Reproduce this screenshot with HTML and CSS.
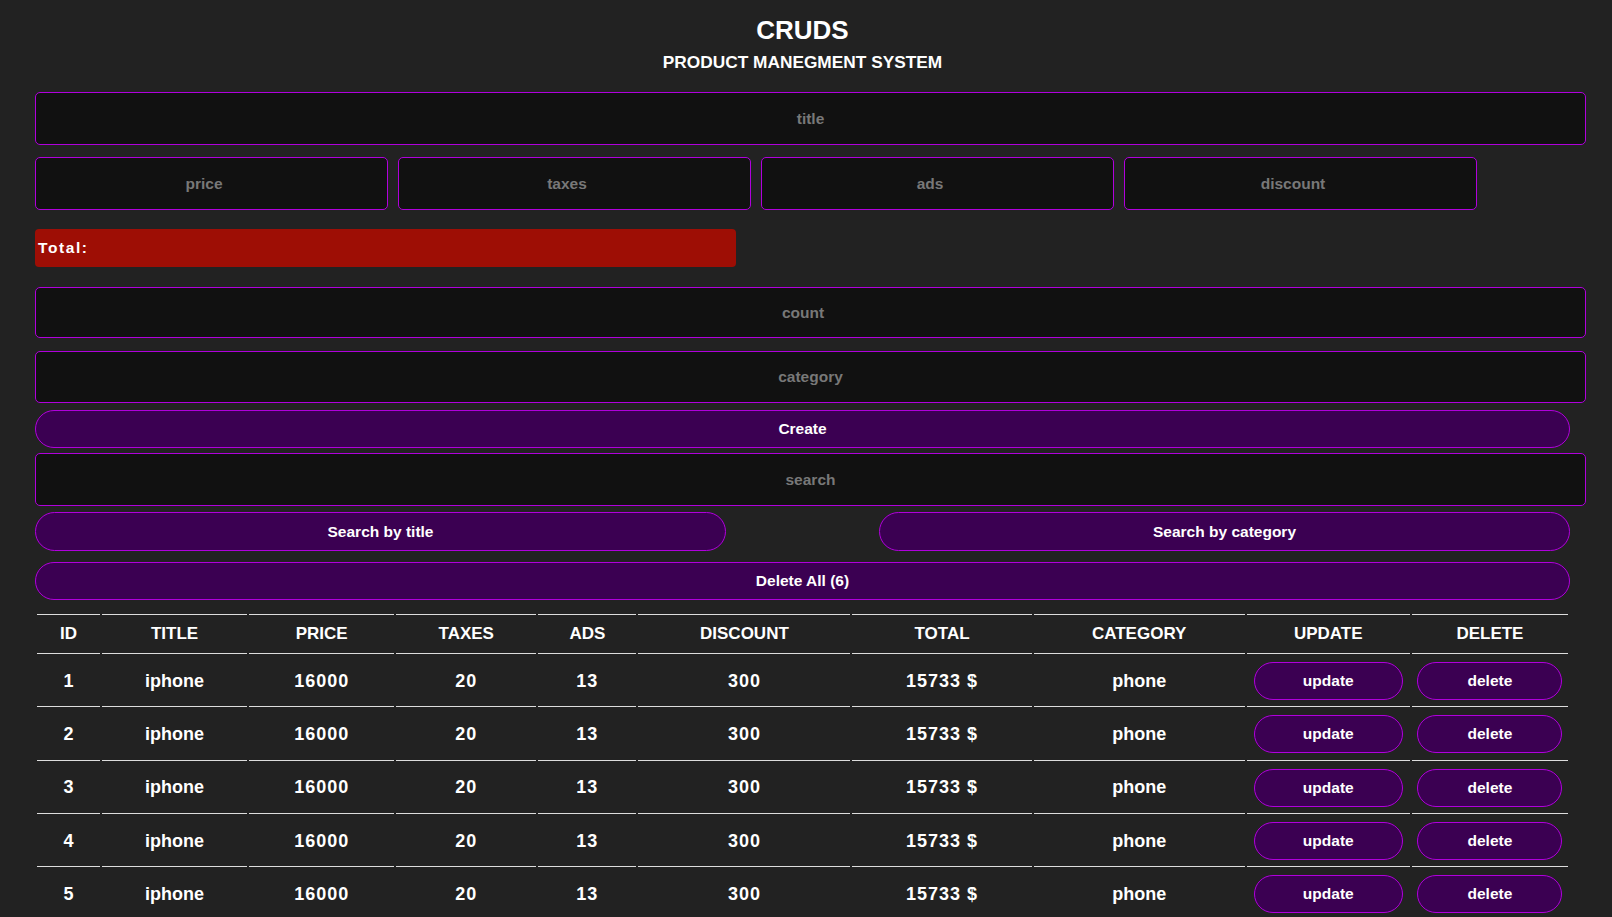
FILE: index.html
```html
<!DOCTYPE html>
<html lang="en">
<head>
<meta charset="utf-8">
<title>CRUDS</title>
<link rel="stylesheet" href="styles.css">
</head>
<body>
<div class="crud">
  <div class="head">
    <h2 class="logo">CRUDS</h2>
    <p class="sub">PRODUCT MANEGMENT SYSTEM</p>
  </div>
  <div class="inputs">
    <input class="field field-title" type="text" placeholder="title">
    <div class="price">
      <input class="field field-small" type="number" placeholder="price">
      <input class="field field-small" type="number" placeholder="taxes">
      <input class="field field-small" type="number" placeholder="ads">
      <input class="field field-small" type="number" placeholder="discount">
    </div>
    <div class="total">Total:</div>
    <input class="field field-count" type="number" placeholder="count">
    <input class="field field-category" type="text" placeholder="category">
    <button class="btn btn-create">Create</button>
  </div>
  <div class="search-area">
    <input class="field field-search" type="text" placeholder="search">
    <div class="search-btns">
      <button class="btn btn-half">Search by title</button>
      <button class="btn btn-half">Search by category</button>
    </div>
  </div>
  <div class="delete-all">
    <button class="btn btn-delall">Delete All (6)</button>
  </div>
  <table class="outputs">
    <colgroup>
      <col class="c-id"><col class="c-title"><col class="c-price"><col class="c-taxes"><col class="c-ads"><col class="c-discount"><col class="c-total"><col class="c-category"><col class="c-update"><col class="c-delete">
    </colgroup>
    <thead>
      <tr class="hrow">
        <th>ID</th><th>TITLE</th><th>PRICE</th><th>TAXES</th><th>ADS</th><th>DISCOUNT</th><th>TOTAL</th><th>CATEGORY</th><th>UPDATE</th><th>DELETE</th>
      </tr>
    </thead>
    <tbody>
      <tr class="brow"><td>1</td><td>iphone</td><td class="num">16000</td><td class="num">20</td><td class="num">13</td><td class="num">300</td><td class="num">15733 $</td><td>phone</td><td><button class="btn btn-row btn-update">update</button></td><td><button class="btn btn-row btn-delete">delete</button></td></tr>
      <tr class="brow"><td>2</td><td>iphone</td><td class="num">16000</td><td class="num">20</td><td class="num">13</td><td class="num">300</td><td class="num">15733 $</td><td>phone</td><td><button class="btn btn-row btn-update">update</button></td><td><button class="btn btn-row btn-delete">delete</button></td></tr>
      <tr class="brow"><td>3</td><td>iphone</td><td class="num">16000</td><td class="num">20</td><td class="num">13</td><td class="num">300</td><td class="num">15733 $</td><td>phone</td><td><button class="btn btn-row btn-update">update</button></td><td><button class="btn btn-row btn-delete">delete</button></td></tr>
      <tr class="brow"><td>4</td><td>iphone</td><td class="num">16000</td><td class="num">20</td><td class="num">13</td><td class="num">300</td><td class="num">15733 $</td><td>phone</td><td><button class="btn btn-row btn-update">update</button></td><td><button class="btn btn-row btn-delete">delete</button></td></tr>
      <tr class="brow"><td>5</td><td>iphone</td><td class="num">16000</td><td class="num">20</td><td class="num">13</td><td class="num">300</td><td class="num">15733 $</td><td>phone</td><td><button class="btn btn-row btn-update">update</button></td><td><button class="btn btn-row btn-delete">delete</button></td></tr>
      <tr class="brow"><td>6</td><td>iphone</td><td class="num">16000</td><td class="num">20</td><td class="num">13</td><td class="num">300</td><td class="num">15733 $</td><td>phone</td><td><button class="btn btn-row btn-update">update</button></td><td><button class="btn btn-row btn-delete">delete</button></td></tr>
    </tbody>
  </table>
</div>
</body>
</html>
```
FILE: styles.css
```css
* {
  box-sizing: border-box;
}
html, body {
  margin: 0;
  padding: 0;
  background: #222222;
}
body {
  color: #ffffff;
  font-family: "Liberation Sans", Arial, sans-serif;
  font-weight: bold;
  overflow: hidden;
}
.crud {
  width: 1535px;
  margin-left: 35px;
  display: flex;
  flex-direction: column;
}
.head {
  padding-top: 15px;
  text-align: center;
}
.logo {
  margin: 0;
  font-size: 26px;
  line-height: 30px;
  font-weight: bold;
}
.sub {
  margin: 7px 0 0;
  font-size: 17.3px;
  line-height: 20px;
}
.inputs, .search-area {
  display: flex;
  flex-direction: column;
}
.field {
  display: block;
  background: #111111;
  border: 1px solid #b000dc;
  border-radius: 5px;
  outline: none;
  color: #ffffff;
  text-align: center;
  font-family: "Liberation Sans", Arial, sans-serif;
  font-weight: bold;
  font-size: 15.5px;
  padding: 0 8px;
}
.field::placeholder {
  color: #787878;
}
.field-title {
  width: 1551px;
  height: 53px;
  margin-top: 20px;
}
.price {
  display: flex;
  gap: 10px;
  margin-top: 12px;
}
.field-small {
  width: 353px;
  height: 53px;
}
.total {
  width: 701px;
  height: 38px;
  margin-top: 19px;
  background: #9e0e05;
  border-radius: 4px;
  padding-left: 3px;
  display: flex;
  align-items: center;
  font-size: 15.5px;
  letter-spacing: 1.6px;
}
.field-count {
  width: 1551px;
  height: 51px;
  margin-top: 20px;
}
.field-category {
  width: 1551px;
  height: 52px;
  margin-top: 13px;
}
.btn {
  display: block;
  background: #3b0052;
  border: 1px solid #b000dc;
  border-radius: 20px;
  color: #ffffff;
  font-family: "Liberation Sans", Arial, sans-serif;
  font-weight: bold;
  font-size: 15.5px;
  padding: 0;
  cursor: pointer;
}
.btn-create {
  width: 1535px;
  height: 38px;
  margin-top: 7px;
}
.field-search {
  width: 1551px;
  height: 53px;
  margin-top: 5px;
}
.search-btns {
  display: flex;
  justify-content: space-between;
  margin-top: 6px;
}
.btn-half {
  width: 691px;
  height: 39px;
}
.delete-all {
  margin-top: 11px;
}
.btn-delall {
  width: 1535px;
  height: 38px;
}
.outputs {
  width: 1535px;
  margin-top: 12px;
  border-spacing: 2px;
  table-layout: fixed;
  text-align: center;
  font-size: 18px;
}
.c-id { width: 63px; }
.c-title { width: 145px; }
.c-price { width: 145px; }
.c-taxes { width: 140px; }
.c-ads { width: 98px; }
.c-discount { width: 212px; }
.c-total { width: 179px; }
.c-category { width: 211px; }
.c-update { width: 163px; }
.c-delete { width: 156px; }
.hrow {
  height: 40px;
}
.outputs th {
  padding: 0;
  font-size: 17px;
  font-weight: bold;
  border-top: 1px solid #dddddd;
  border-bottom: 1px solid #dddddd;
}
.brow {
  height: 51.3px;
}
.outputs td {
  padding: 0;
  border-bottom: 1px solid #dddddd;
}
.num {
  letter-spacing: 1px;
}
.btn-row {
  height: 38px;
  margin: 0 auto;
  font-size: 15.5px;
}
.btn-update {
  width: 149px;
}
.btn-delete {
  width: 145px;
}
```
